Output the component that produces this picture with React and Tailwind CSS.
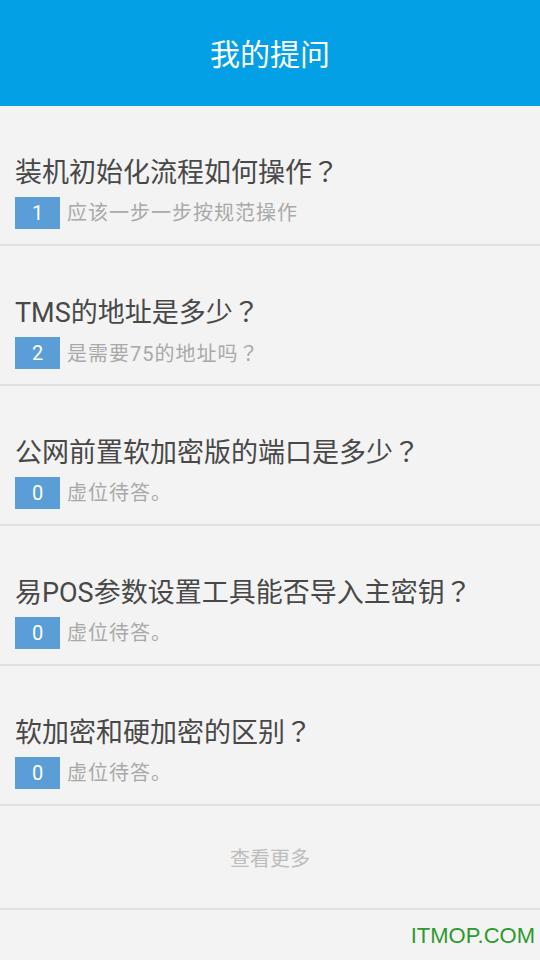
const questions = [
  { title: '装机初始化流程如何操作', count: 1, answer: '应该一步一步按规范操作', q: false },
  { title: 'TMS的地址是多少', count: 2, answer: '是需要75的地址吗', q: true },
  { title: '公网前置软加密版的端口是多少', count: 0, answer: '虚位待答。', q: false },
  { title: '易POS参数设置工具能否导入主密钥', count: 0, answer: '虚位待答。', q: false },
  { title: '软加密和硬加密的区别', count: 0, answer: '虚位待答。', q: false },
];

const font = "font-['Roboto','Noto_Sans_CJK_SC',sans-serif]";

// full-width question mark, centred in its cell like the Android font draws it
const Mark = () => <span className="font-['Noto_Sans_CJK_JP',sans-serif]">？</span>;

const QuestionItem = ({ item }) => (
  <div className="pt-[48px] pb-[15px] px-[15px] border-b-2 border-[#e0e0e0]">
    <div className="h-[34px] leading-[34px] text-[27px] text-[#484848] whitespace-nowrap">
      {item.title}
      <Mark />
    </div>
    <div className="mt-[9px] flex items-center h-[32px]">
      <div className="w-[45px] h-[32px] bg-[#5b9dd6] text-white text-[20px] flex items-center justify-center">
        {item.count}
      </div>
      <span className="ml-[7px] text-[20px] text-[#a9a9a9] tracking-[1px]">
        {item.answer}
        {item.q && <Mark />}
      </span>
    </div>
  </div>
);

export default function App() {
  return (
    <div className={`min-h-[960px] w-[540px] bg-[#f3f3f3] flex flex-col ${font}`}>
      <div className="h-[106px] bg-[#03a0e6] flex items-center justify-center">
        <h1 className="text-[30px] text-white mt-[2px]">我的提问</h1>
      </div>

      {questions.map((q, i) => (
        <QuestionItem key={i} item={q} />
      ))}

      <div className="h-[104px] pt-[3px] flex items-center justify-center border-b-2 border-[#e0e0e0]">
        <span className="text-[20px] text-[#bdbdbd]">查看更多</span>
      </div>

      <div className="flex-1 flex justify-end items-center pr-[5px]">
        <span className="font-['Liberation_Sans',sans-serif] text-[22px] text-[#2e992e]">ITMOP.COM</span>
      </div>
    </div>
  );
}
